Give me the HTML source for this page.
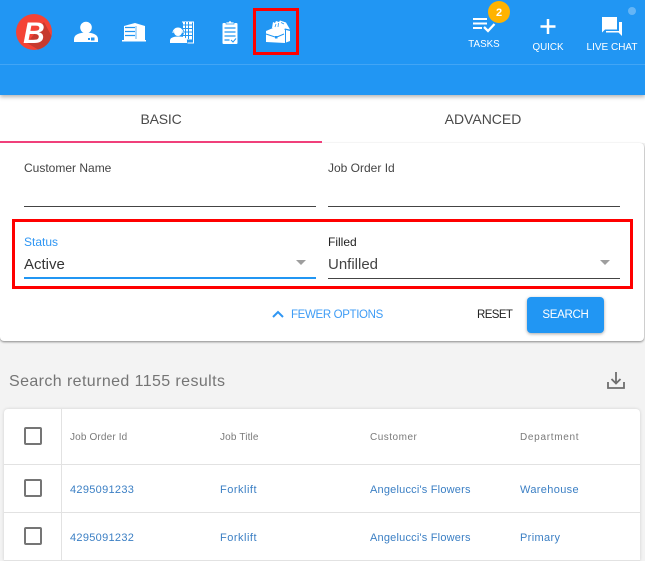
<!DOCTYPE html>
<html><head><meta charset="utf-8"><style>
html,body{margin:0;padding:0}
body{width:645px;height:561px;overflow:hidden;background:#f3f3f3;position:relative;font-family:"Liberation Sans",sans-serif}
.a{position:absolute;white-space:nowrap}
.t{line-height:16px;height:16px}
.nav{color:#fff;font-size:10px;font-weight:400;text-align:center}
.th{font-size:10px;color:#7a7a7a;letter-spacing:.5px}
.td{font-size:11px;color:#3b7fc4;letter-spacing:.35px}
.cb{width:14px;height:14px;border:2px solid #757575;border-radius:2px}
.hl{height:1px;background:#e2e2e2}
</style></head><body>
<div class="a" style="left:0;top:95px;width:645px;height:48px;background:#fff"></div>
<div class="a" style="left:0;top:143px;width:644px;height:198px;background:#fff;border-radius:0 4px 4px 4px;box-shadow:0 1px 2px rgba(0,0,0,.45)"></div>
<div class="a" style="left:0;top:0;width:645px;height:95px;background:#2196f3;box-shadow:0 2px 4px rgba(0,0,0,.3)"></div>
<div class="a" style="left:0;top:64px;width:645px;height:1px;background:#42a5f5"></div>

<svg class="a" style="left:0;top:0" width="645" height="64" viewBox="0 0 645 64">
<circle cx="34" cy="32" r="18" fill="#f44336"/>
<path d="M27 43L44 22 51.500 36A18 18 0 0 1 38 49.500Z" fill="#c63a2f"/>
<text x="34" y="43" text-anchor="middle" font-family="Liberation Sans" font-size="30" font-weight="700" font-style="italic" fill="#fff">B</text>
<circle cx="86" cy="27.500" r="5.800" fill="#fff"/>
<path d="M74 42v-3c0-4 5-6.500 12-6.500s12 2.500 12 6.500v3z" fill="#fff"/>
<path d="M88 38h2v2h-2zM91 37.500h3.500v3H91z" fill="#2196f3"/>
<path d="M124 26l11-3 10 3v14h-21z" fill="#fff"/>
<rect x="122" y="40" width="24" height="1.500" fill="#fff"/>
<path d="M125 27.500h10M125 31.500h10M125 35.500h10" stroke="#2196f3" stroke-width="1.300"/>
<path d="M136 26v13" stroke="#2196f3" stroke-width=".7"/>
<path d="M182 22h11.500v21h-6" fill="none" stroke="#fff" stroke-width="1"/>
<path d="M183 21.500h9v18h-9z" fill="#fff"/>
<path d="M185.500 22v17M188.500 22v17M183 25h9M183 28.500h9M183 32h9M183 35.500h9" stroke="#2196f3" stroke-width="1"/>
<circle cx="178" cy="32" r="6" fill="#2196f3"/>
<circle cx="178" cy="32" r="4" fill="#fff"/>
<path d="M173 33a5 5 0 0 1 10 0" fill="none" stroke="#fff" stroke-width="1"/>
<path d="M170 43v-2.500c0-2.500 3-4 8.500-4s8.500 1.500 8.500 4V43z" fill="#fff"/>
<rect x="222.500" y="23" width="15" height="21" rx="1" fill="#fff"/>
<path d="M226 24v-2h2.500l1.500-2 1.500 2H234v2z" fill="#fff" stroke="#2196f3" stroke-width=".7"/>
<path d="M224.500 28h11M224.500 32h11M224.500 36h11M224.500 40h5" stroke="#2196f3" stroke-width="1.200"/>
<path d="M231 40l2 2 3-3.500" fill="none" stroke="#2196f3" stroke-width="1"/>
<path d="M266 31l7-3h10l2 2v13l-19-1z" fill="#fff"/>
<path d="M286 30l4 1v10l-4 1.500z" fill="#fff"/>
<path d="M266 34l9 3h2l7-3" stroke="#2196f3" stroke-width="1" fill="none"/>
<rect x="275" y="36" width="2.500" height="2.500" fill="#2196f3"/>
<path d="M272 28l1-6 2 1 1-2 3 1 1-1.500 6 2 4 7-5-1-1 1z" fill="#fff"/>
<path d="M275 27l1-3M278 27l.5-4M281 22.500l3 1.500" stroke="#2196f3" stroke-width=".8"/>
<rect x="254.500" y="9.500" width="43" height="44" fill="none" stroke="#f00" stroke-width="3"/>
<path d="M473 19h14M473 23.500h14M473 28h9" stroke="#fff" stroke-width="2" fill="none"/>
<path d="M484 27l4 4 6.500-7" stroke="#fff" stroke-width="2.300" fill="none"/>
<circle cx="499" cy="12" r="11" fill="#ffb300"/>
<text x="499" y="16" text-anchor="middle" font-family="Liberation Sans" font-size="11" font-weight="700" fill="#fff">2</text>
<path d="M548 19v15M540.500 26.500h15" stroke="#fff" stroke-width="2.500"/>
<path d="M602 17h15v12.500h-12l-3 3z" fill="#fff"/>
<path d="M619 22h3v14l-3.500-3.500h-12.500v-1.500h13z" fill="#fff"/>
<circle cx="632" cy="11" r="4" fill="#64b5f6"/>
</svg>
<div class="a t nav" style="left:459px;width:50px;top:37px;font-size:9.800px">TASKS</div>
<div class="a t nav" style="left:523px;width:50px;top:40px;font-size:9.800px">QUICK</div>
<div class="a t nav" style="left:582px;width:60px;top:40px">LIVE CHAT</div>

<div class="a t" style="left:0;width:322px;top:111px;text-align:center;font-size:14px;letter-spacing:-.2px;color:#4a4a4a">BASIC</div>
<div class="a t" style="left:322px;width:322px;top:111px;text-align:center;font-size:14px;color:#4a4a4a">ADVANCED</div>
<div class="a" style="left:0;top:141px;width:322px;height:2px;background:#f0407b"></div>

<div class="a t" style="left:24px;top:160px;font-size:12px;color:#444">Customer Name</div>
<div class="a t" style="left:328px;top:160px;font-size:12px;color:#444">Job Order Id</div>
<div class="a" style="left:24px;top:206px;width:292px;height:1px;background:#444"></div>
<div class="a" style="left:328px;top:206px;width:292px;height:1px;background:#444"></div>

<div class="a" style="left:12px;top:219px;width:615px;height:64px;border:3px solid #f00"></div>
<div class="a t" style="left:24px;top:234px;font-size:12px;color:#2f96f3">Status</div>
<div class="a t" style="left:328px;top:234px;font-size:12px;color:#222">Filled</div>
<div class="a t" style="left:24px;top:257px;font-size:15px;color:#333">Active</div>
<div class="a t" style="left:328px;top:257px;font-size:15px;color:#444">Unfilled</div>
<div class="a" style="left:24px;top:277px;width:292px;height:2px;background:#2196f3"></div>
<div class="a" style="left:328px;top:278px;width:292px;height:1px;background:#444"></div>
<div class="a" style="left:296px;top:260px;width:0;height:0;border-left:5px solid transparent;border-right:5px solid transparent;border-top:5px solid #9e9e9e"></div>
<div class="a" style="left:600px;top:260px;width:0;height:0;border-left:5px solid transparent;border-right:5px solid transparent;border-top:5px solid #9e9e9e"></div>

<svg class="a" style="left:271px;top:309px" width="14" height="11" viewBox="0 0 14 11"><path d="M2 8l5-5 5 5" fill="none" stroke="#2f96f3" stroke-width="2"/></svg>
<div class="a t" style="left:291px;top:307px;font-size:11.500px;letter-spacing:-.35px;color:#3f9cf5">FEWER OPTIONS</div>
<div class="a t" style="left:477px;top:307px;font-size:11.500px;letter-spacing:-.6px;color:#222">RESET</div>
<div class="a t" style="left:527px;top:297px;width:77px;height:36px;line-height:36px;background:#2196f3;border-radius:4px;color:#fff;font-size:11.500px;letter-spacing:-.3px;text-align:center;box-shadow:0 1px 3px rgba(0,0,0,.35)">SEARCH</div>

<div class="a" style="left:9px;top:372px;font-size:16px;line-height:20px;color:#757575;letter-spacing:.4px">Search returned 1155 results</div>
<svg class="a" style="left:606px;top:370px" width="20" height="20" viewBox="0 0 20 20"><path d="M2 12v6h16v-6M10 2v11M5.500 9l4.500 4.500L14.500 9" fill="none" stroke="#6e6e6e" stroke-width="1.800"/></svg>

<div class="a" style="left:4px;top:409px;width:636px;height:152px;background:#fff;border-radius:4px 4px 0 0;box-shadow:0 0 3px rgba(0,0,0,.15)"></div>
<div class="a" style="left:61px;top:409px;width:1px;height:152px;background:#e2e2e2"></div>
<div class="a hl" style="left:4px;top:464px;width:636px"></div>
<div class="a hl" style="left:4px;top:512px;width:636px"></div>
<div class="a hl" style="left:4px;top:560px;width:636px"></div>
<div class="a cb" style="left:24px;top:427px"></div>
<div class="a cb" style="left:24px;top:479px"></div>
<div class="a cb" style="left:24px;top:527px"></div>

<div class="a t th" style="left:70px;top:430px;letter-spacing:.15px">Job Order Id</div>
<div class="a t th" style="left:220px;top:430px;letter-spacing:.15px">Job Title</div>
<div class="a t th" style="left:370px;top:430px">Customer</div>
<div class="a t th" style="left:520px;top:430px;letter-spacing:.7px">Department</div>

<div class="a t td" style="left:70px;top:482px;letter-spacing:.3px">4295091233</div>
<div class="a t td" style="left:220px;top:482px;letter-spacing:.5px">Forklift</div>
<div class="a t td" style="left:370px;top:482px;letter-spacing:.2px">Angelucci's Flowers</div>
<div class="a t td" style="left:520px;top:482px">Warehouse</div>
<div class="a t td" style="left:70px;top:530px;letter-spacing:.3px">4295091232</div>
<div class="a t td" style="left:220px;top:530px;letter-spacing:.5px">Forklift</div>
<div class="a t td" style="left:370px;top:530px;letter-spacing:.2px">Angelucci's Flowers</div>
<div class="a t td" style="left:520px;top:530px">Primary</div>
</body></html>
